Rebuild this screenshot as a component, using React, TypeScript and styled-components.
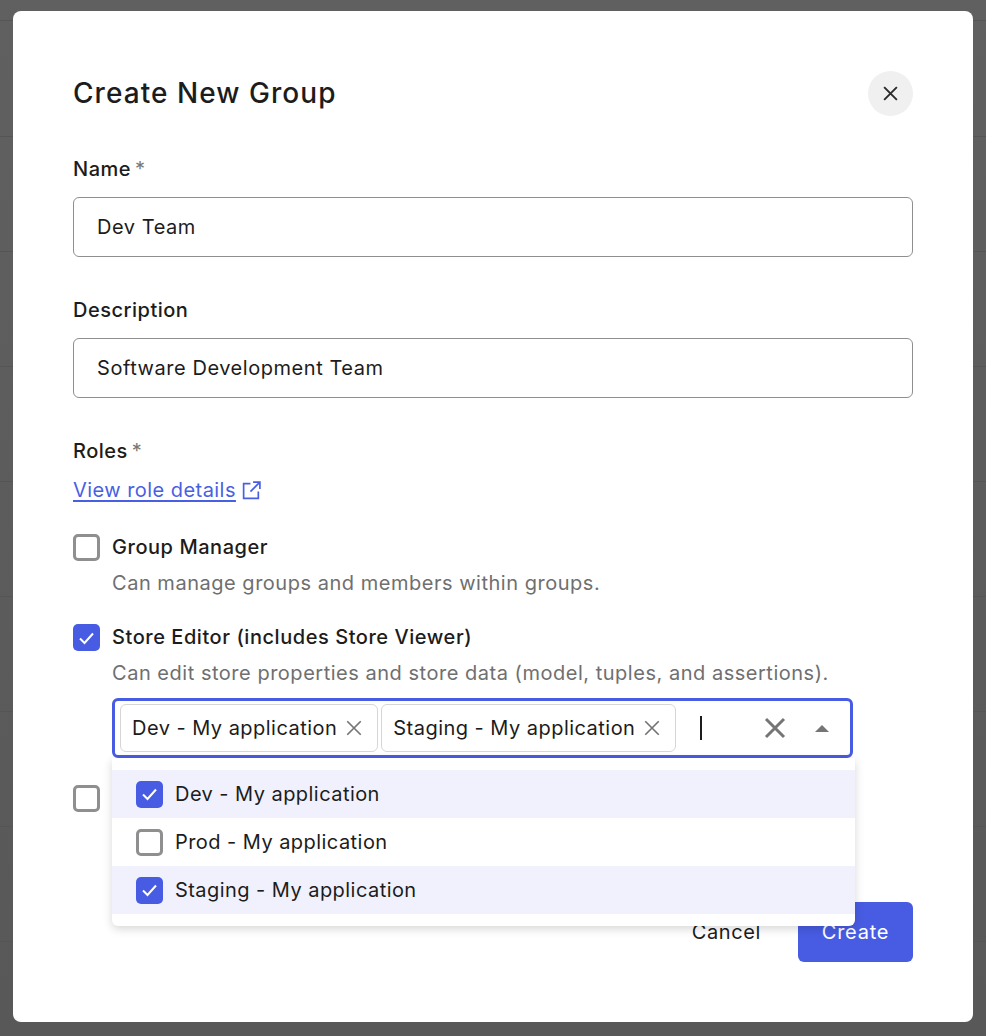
import React from 'react'
import styled, { createGlobalStyle } from 'styled-components'

const GlobalStyle = createGlobalStyle`
  html, body {
    margin: 0;
    padding: 0;
    font-family: Inter, "Liberation Sans", sans-serif;
    color: #1c1c1c;
  }
  * {
    box-sizing: border-box;
  }
`

const Overlay = styled.div`
  height: 1036px;
  padding: 11px 13px 14px;
  background-color: #5c5c5c;
  background-image: repeating-linear-gradient(
      to bottom,
      transparent 0,
      transparent 114px,
      #555 114px,
      #555 115px
    ),
    linear-gradient(to bottom, #606060, #585858);
  background-position: 0 22px, 0 0;
  overflow: hidden;
`

const Modal = styled.div`
  height: 1011px;
  padding: 60px;
  background: #fff;
  border-radius: 8px;
  display: flex;
  flex-direction: column;
`

const Header = styled.div`
  display: flex;
  align-items: center;
  justify-content: space-between;
  height: 45px;
`

const Title = styled.h1`
  margin: -2px 0 0;
  font-size: 28px;
  font-weight: 550;
  letter-spacing: 1.05px;
  color: #1c1c1c;
`

const CloseButton = styled.button`
  width: 45px;
  height: 45px;
  padding: 0;
  border: 0;
  border-radius: 50%;
  background: #f0f0f0;
  color: #2b2b2b;
  display: flex;
  align-items: center;
  justify-content: center;
`

const Field = styled.div`
  margin-top: ${(p: { $top: number }) => p.$top}px;
`

const Label = styled.div`
  height: 24px;
  font-size: 20px;
  line-height: 26px;
  font-weight: 450;
  letter-spacing: 0.5px;
  display: flex;
  gap: 4px;
`

const Star = styled.span`
  color: #777;
  font-weight: 400;
`

const Input = styled.div`
  margin-top: 17px;
  height: 60px;
  padding: 0 23px;
  border: 1px solid #8f8f8f;
  border-radius: 6px;
  font-size: 20px;
  letter-spacing: 0.55px;
  display: flex;
  align-items: center;
`

const RoleLink = styled.a`
  margin-top: 15px;
  display: inline-flex;
  align-items: center;
  gap: 5px;
  height: 26px;
  font-size: 20px;
  letter-spacing: 0.45px;
  color: #485fe3;
  text-decoration: none;
`

const LinkText = styled.span`
  text-decoration: underline;
  text-underline-offset: 3px;
`

const RoleRow = styled.div`
  margin-top: ${(p: { $top: number }) => p.$top}px;
  display: flex;
  gap: 12px;
`

const Check = styled.span<{ $on?: boolean }>`
  flex: none;
  width: 27px;
  height: 27px;
  border-radius: 5px;
  border: ${(p) => (p.$on ? '0' : '3px solid #8f8f8f')};
  background: ${(p) => (p.$on ? '#485ce3' : '#fff')};
  color: #fff;
  display: flex;
  align-items: center;
  justify-content: center;
`

const RoleBody = styled.div`
  flex: 1;
  padding-right: 60px;
`

const RoleName = styled.div`
  height: 27px;
  font-size: 20px;
  line-height: 27px;
  font-weight: 450;
  letter-spacing: 0.55px;
`

const RoleHint = styled.div`
  margin-top: 9px;
  height: 27px;
  font-size: 20px;
  line-height: 27px;
  letter-spacing: 0.52px;
  color: #6f6f6f;
  white-space: nowrap;
`

const SelectWrap = styled.div`
  position: relative;
  margin-top: 11px;
`

const SelectBox = styled.div`
  height: 60px;
  border: 3px solid #485ce3;
  border-radius: 6px;
  padding: 3px 0 0 5px;
  display: flex;
  align-items: flex-start;
  gap: 3px;
`

const Chip = styled.div`
  height: 48px;
  padding: 0 14px 0 11px;
  border: 1px solid #d6d6d6;
  border-radius: 6px;
  font-size: 20px;
  letter-spacing: 0.47px;
  display: flex;
  align-items: center;
  gap: 8px;
  white-space: nowrap;
  color: #1c1c1c;
  svg {
    color: #757575;
  }
`

const Caret = styled.span`
  width: 2px;
  height: 24px;
  margin: 12px 0 0 21px;
  background: #1c1c1c;
`

const SelectIcons = styled.div`
  margin-left: auto;
  height: 48px;
  padding-right: 21px;
  display: flex;
  align-items: center;
  gap: 28px;
  color: #757575;
`

const Menu = styled.div`
  position: absolute;
  top: 60px;
  left: 0;
  width: 743px;
  height: 168px;
  padding: 12px 0;
  background: #fff;
  border-radius: 0 0 6px 6px;
  box-shadow: 0 3px 10px rgba(0, 0, 0, 0.16);
  z-index: 2;
`

const MenuItem = styled.div<{ $on?: boolean }>`
  height: 48px;
  padding: 0 24px;
  display: flex;
  align-items: center;
  gap: 12px;
  font-size: 20px;
  letter-spacing: 0.45px;
  background: ${(p) => (p.$on ? '#f1f1fd' : '#fff')};
`

const Footer = styled.div`
  margin-top: auto;
  display: flex;
  justify-content: flex-end;
  align-items: center;
  gap: 37px;
`

const CancelButton = styled.button`
  padding: 0;
  border: 0;
  background: none;
  font: inherit;
  font-size: 20px;
  letter-spacing: 0.6px;
  color: #1c1c1c;
`

const CreateButton = styled.button`
  width: 115px;
  height: 60px;
  padding: 0;
  border: 0;
  border-radius: 6px;
  background: #485ce3;
  color: #fff;
  font: inherit;
  font-size: 20px;
  letter-spacing: 0.75px;
`

const CloseIcon = ({ size, width = 2 }: { size: number; width?: number }) => (
  <svg width={size} height={size} viewBox="0 0 16 16" fill="none" stroke="currentColor" strokeWidth={width}>
    <path d="M2 2l12 12M14 2L2 14" />
  </svg>
)

const Tick = () => (
  <svg width="17" height="14" viewBox="0 0 17 14" fill="none" stroke="currentColor" strokeWidth="2">
    <path d="M2 7.5l4.5 4.5L15 2.5" />
  </svg>
)

const ExternalIcon = () => (
  <svg width="21" height="21" viewBox="0 0 20 20" fill="none" stroke="currentColor" strokeWidth="1.6">
    <path d="M9 3.5H2.5v14h14V11M11.5 2h6.5v6.5M18 2l-9 9" />
  </svg>
)

const CaretUp = () => (
  <svg width="14" height="7" viewBox="0 0 14 7" fill="currentColor">
    <path d="M7 0l7 7H0z" />
  </svg>
)

const App: React.FC = () => (
  <>
    <GlobalStyle />
    <Overlay>
      <Modal>
        <Header>
          <Title>Create New Group</Title>
          <CloseButton aria-label="Close">
            <CloseIcon size={17} width={1.8} />
          </CloseButton>
        </Header>
        <Field $top={40}>
          <Label>
            Name <Star>*</Star>
          </Label>
          <Input>Dev Team</Input>
        </Field>
        <Field $top={40}>
          <Label>Description</Label>
          <Input>Software Development Team</Input>
        </Field>
        <Field $top={40}>
          <Label>
            Roles <Star>*</Star>
          </Label>
          <RoleLink href="#">
            <LinkText>View role details</LinkText>
            <ExternalIcon />
          </RoleLink>
        </Field>
        <RoleRow $top={31}>
          <Check />
          <RoleBody>
            <RoleName>Group Manager</RoleName>
            <RoleHint>Can manage groups and members within groups.</RoleHint>
          </RoleBody>
        </RoleRow>
        <RoleRow $top={27}>
          <Check $on>
            <Tick />
          </Check>
          <RoleBody>
            <RoleName>Store Editor (includes Store Viewer)</RoleName>
            <RoleHint>Can edit store properties and store data (model, tuples, and assertions).</RoleHint>
            <SelectWrap>
              <SelectBox>
                <Chip>
                  Dev - My application
                  <CloseIcon size={18} width={1.5} />
                </Chip>
                <Chip>
                  Staging - My application
                  <CloseIcon size={18} width={1.5} />
                </Chip>
                <Caret />
                <SelectIcons>
                  <CloseIcon size={24} width={2} />
                  <CaretUp />
                </SelectIcons>
              </SelectBox>
              <Menu>
                <MenuItem $on>
                  <Check $on>
                    <Tick />
                  </Check>
                  Dev - My application
                </MenuItem>
                <MenuItem>
                  <Check />
                  Prod - My application
                </MenuItem>
                <MenuItem $on>
                  <Check $on>
                    <Tick />
                  </Check>
                  Staging - My application
                </MenuItem>
              </Menu>
            </SelectWrap>
          </RoleBody>
        </RoleRow>
        <RoleRow $top={27}>
          <Check />
        </RoleRow>
        <Footer>
          <CancelButton>Cancel</CancelButton>
          <CreateButton>Create</CreateButton>
        </Footer>
      </Modal>
    </Overlay>
  </>
)

export default App
